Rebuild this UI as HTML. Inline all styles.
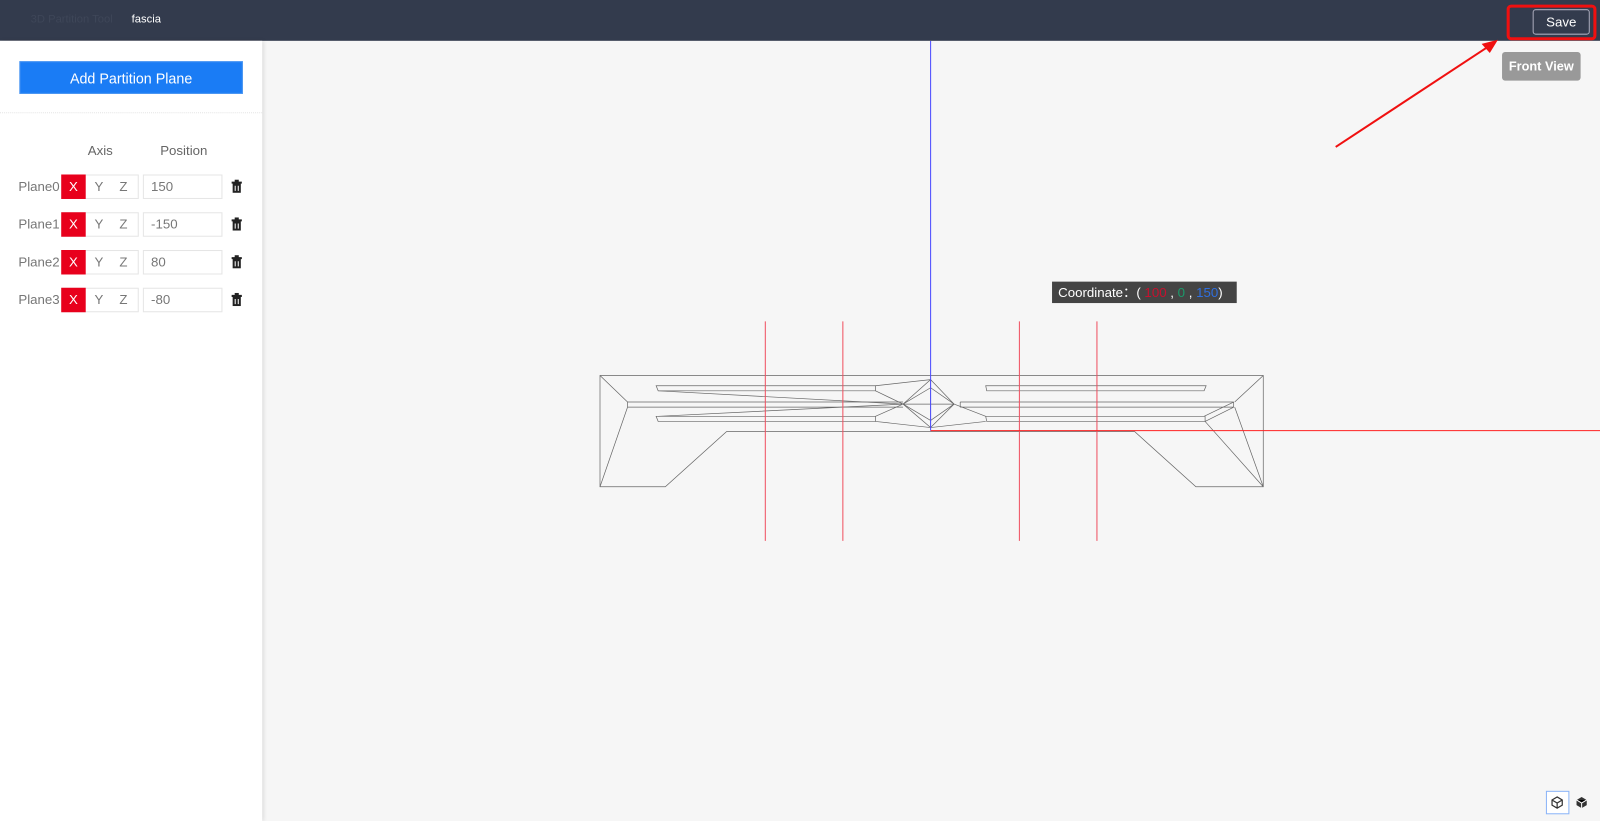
<!DOCTYPE html>
<html><head><meta charset="utf-8"><style>
html,body{margin:0;padding:0;width:1600px;height:821px;overflow:hidden;background:#f6f6f6}
#w{position:absolute;left:0;top:0;width:1568px;height:805px;transform:scale(1.020408);transform-origin:0 0;font-family:"Liberation Sans",sans-serif;background:#f6f6f6}
.hdr{position:absolute;left:0;top:0;width:1568px;height:40px;background:#333b4d}
.side{position:absolute;left:0;top:40px;width:257px;height:765px;background:#fff;box-shadow:1px 0 4px rgba(0,0,0,.12)}
.btn{position:absolute;left:19px;top:20px;width:219px;height:32px;background:#1a7cf5;color:#fff;font-size:14px;text-align:center;line-height:32px;border:1px solid #4b96f2;box-sizing:border-box}
.sep{position:absolute;left:0;top:70px;width:257px;border-top:1px dotted #e4e4e4}
.lbl{position:absolute;font-size:13px;color:#666}
.row{position:absolute;left:0;height:24px;font-size:13px;color:#777}
.row .n{position:absolute;left:18px;top:4px}
.ax{position:absolute;left:60px;top:0;width:74px;height:22px;border:1px solid #e5e5e5}
.ax span{position:absolute;top:0;width:24px;height:22px;line-height:22px;text-align:center}
.ax .x{left:-1px;top:-1px;height:24px;line-height:24px;background:#e8001c;color:#fff}
.pos{position:absolute;left:140px;top:0;height:22px;border:1px solid #e5e5e5;line-height:22px;padding-left:7px;width:69px}
.tr{position:absolute;left:226px;top:5px}
</style></head><body><div id="w">
<div class="hdr">
<span style="position:absolute;left:30px;top:13px;font-size:11px;color:#3e4658">3D Partition Tool</span>
<span style="position:absolute;left:129px;top:13px;font-size:11px;color:#fff">fascia</span>
<div style="position:absolute;left:1502px;top:9px;width:54px;height:23px;border:1px solid #aab;border-radius:3px;color:#fff;font-size:13px;text-align:center;line-height:23px">Save</div>
</div>
<div class="side">
<div class="btn">Add Partition Plane</div>
<div class="sep"></div>
<div class="lbl" style="left:86px;top:100px">Axis</div>
<div class="lbl" style="left:157px;top:100px">Position</div>
<div class="row" style="top:131px"><span class="n">Plane0</span><div class="ax"><span class="x">X</span><span style="left:24px">Y</span><span style="left:48px">Z</span></div><div class="pos">150</div><svg class="tr" width="12" height="13" viewBox="0 0 12 13"><path d="M1 2h10v2H1zM4 0h4v2H4zM2 4h8v9H2z" fill="#222"/><path d="M4.5 6v5M7.5 6v5" stroke="#fff" stroke-width="1"/></svg></div>
<div class="row" style="top:168px"><span class="n">Plane1</span><div class="ax"><span class="x">X</span><span style="left:24px">Y</span><span style="left:48px">Z</span></div><div class="pos">-150</div><svg class="tr" width="12" height="13" viewBox="0 0 12 13"><path d="M1 2h10v2H1zM4 0h4v2H4zM2 4h8v9H2z" fill="#222"/><path d="M4.5 6v5M7.5 6v5" stroke="#fff" stroke-width="1"/></svg></div>
<div class="row" style="top:205px"><span class="n">Plane2</span><div class="ax"><span class="x">X</span><span style="left:24px">Y</span><span style="left:48px">Z</span></div><div class="pos">80</div><svg class="tr" width="12" height="13" viewBox="0 0 12 13"><path d="M1 2h10v2H1zM4 0h4v2H4zM2 4h8v9H2z" fill="#222"/><path d="M4.5 6v5M7.5 6v5" stroke="#fff" stroke-width="1"/></svg></div>
<div class="row" style="top:242px"><span class="n">Plane3</span><div class="ax"><span class="x">X</span><span style="left:24px">Y</span><span style="left:48px">Z</span></div><div class="pos">-80</div><svg class="tr" width="12" height="13" viewBox="0 0 12 13"><path d="M1 2h10v2H1zM4 0h4v2H4zM2 4h8v9H2z" fill="#222"/><path d="M4.5 6v5M7.5 6v5" stroke="#fff" stroke-width="1"/></svg></div>
</div>
<div style="position:absolute;left:1472px;top:51px;width:77px;height:28px;background:#999;border-radius:3px;color:#fff;font-weight:bold;font-size:12.5px;text-align:center;line-height:28px">Front View</div>
<div style="position:absolute;left:1031px;top:276px;width:181px;height:21px;background:#444;color:#fff;font-size:13px;line-height:21px;padding-left:6px;box-sizing:border-box">Coordinate：( <span style="color:#c8102e">100</span> , <span style="color:#1a9a6a">0</span> , <span style="color:#2f6fe0">150</span>)</div>
<svg style="position:absolute;left:0;top:0" width="1568" height="805">
<g fill="none" stroke="#666" stroke-width="0.7">
<path d="M588 368H1238V477H1172L1112 423H712L652 477H588Z"/>
<path d="M588 368L615 394M588 477L615 399M1238 368L1210 394M1238 477L1210 399"/>
<path d="M615 394H885M615 399H885M615 394v5M941 394H1209M941 399H1209M941 394v5M1209 394v5"/>
<path d="M643 378H858v5H645zM643 408H858v5H645zM966 378H1182l-2 5H967zM966 408H1181v5H967z"/>
<path d="M912 372L885 396L912 419L935 396ZM885 396H935M912 372V419"/>
<path d="M858 383L885 396M858 408L885 396M858 378L912 372M858 413L912 419M966 408L935 396M966 413L912 419M645 383L885 396M645 408L885 396M1181 413L1209 399M1180 408L1209 394M1181 413L1238 477"/>
<path d="M885 396L912 380M935 396L912 380M885 396L912 412M935 396L912 412"/>
</g>
<g stroke="#f05060" stroke-width="1"><path d="M750 315V530M826 315V530M999 315V530M1075 315V530"/></g>
<path d="M912 40V422" stroke="#4a4aff" stroke-width="1"/>
<path d="M912 422H1568" stroke="#ff2020" stroke-width="1"/>
<rect x="1478" y="6" width="85" height="32" rx="3" fill="none" stroke="#f01010" stroke-width="3"/>
<path d="M1309 144L1458 46" stroke="#f01010" stroke-width="2"/>
<path d="M1468 39L1452 43L1460 52Z" fill="#f01010"/>
<rect x="1515.5" y="775.5" width="22" height="22" fill="#fff" stroke="#8ab4f8"/>
<rect x="1539.5" y="775.5" width="22" height="22" fill="#f6f6f6"/>
<path d="M1526 781l5 3v5l-5 3l-5-3v-5zM1521 784l5 3l5-3M1526 787v5" fill="none" stroke="#333" stroke-width="1.2"/>
<path d="M1550 781l5 3v5l-5 3l-5-3v-5z" fill="#333"/><path d="M1545 784l5 3l5-3M1550 787v5" stroke="#fff" stroke-width="1"/>
</svg>
</div></body></html>
